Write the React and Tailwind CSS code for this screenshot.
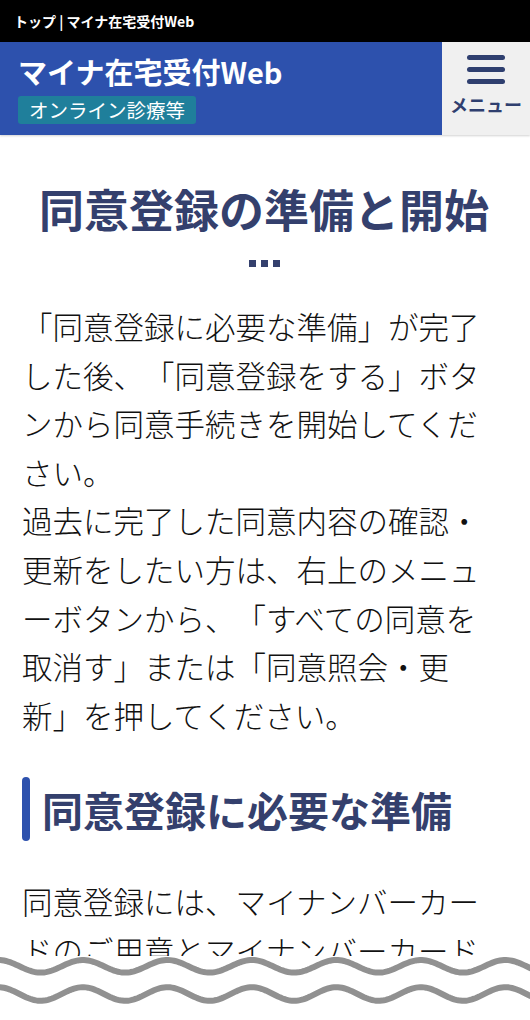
import React from "react";

function wavePath(mid, amp, period, x0, width) {
  const pts = [];
  for (let x = -6; x <= width + 6; x += 2) {
    const y = mid - amp * Math.cos((2 * Math.PI * (x - x0)) / period);
    pts.push(`${x === -6 ? "M" : "L"}${x.toFixed(1)} ${y.toFixed(2)}`);
  }
  return pts.join(" ");
}

function WaveCut() {
  const w = 530;
  return (
    <div className="absolute left-0 right-0 top-[956px] h-[64px] bg-white">
      <svg width={w} height="64" viewBox={`0 0 ${w} 64`} className="block">
        <path d={wavePath(10.3, 6.3, 84.5, -1.6, w)} fill="none" stroke="#919191" strokeWidth="6" />
        <path d={wavePath(38, 6.8, 84.5, -1.6, w)} fill="none" stroke="#919191" strokeWidth="6" />
      </svg>
    </div>
  );
}

export default function App() {
  return (
    <div className="relative h-[1020px] w-full overflow-hidden bg-white font-['Noto_Sans_CJK_JP','Noto_Sans',sans-serif] [text-spacing-trim:space-all]">
      <div className="flex h-[42px] items-center bg-black pl-[14px] text-[14px] font-bold text-white">
        トップ | マイナ在宅受付Web
      </div>
      <header className="flex h-[93px] shadow-[0_1px_2px_rgba(0,0,0,0.18)]">
        <div className="flex flex-1 flex-col items-start bg-[#2d51ad] pl-[18px] pt-[12px]">
          <h1 className="text-[29px] font-bold leading-[34px] text-white">マイナ在宅受付Web</h1>
          <span className="mt-[8px] rounded-[3px] bg-[#1f7f9b] px-[11px] text-[19.5px] leading-[28px] text-white">
            オンライン診療等
          </span>
        </div>
        <button className="flex w-[88px] flex-col items-center bg-[#f0f0f0] pt-[13px]">
          <span className="flex flex-col gap-[7px]">
            <span className="block h-[5px] w-[38px] rounded-full bg-[#2f3f6f]" />
            <span className="block h-[5px] w-[38px] rounded-full bg-[#2f3f6f]" />
            <span className="block h-[5px] w-[38px] rounded-full bg-[#2f3f6f]" />
          </span>
          <span className="mt-[8px] text-[18px] font-bold leading-[24px] text-[#2f3f6f]">メニュー</span>
        </button>
      </header>
      <main className="pl-[22px] pr-[24px] pt-[47px]">
        <h2 className="text-center text-[45px] font-bold leading-[54px] text-[#34406d]">
          同意登録の準備と開始
          <span className="flex h-[54px] items-center justify-center gap-[5px]" aria-label="…">
            <span className="block h-[7px] w-[7px] bg-[#34406d]" />
            <span className="block h-[7px] w-[7px] bg-[#34406d]" />
            <span className="block h-[7px] w-[7px] bg-[#34406d]" />
          </span>
        </h2>
        <p className="mt-[12px] text-[30.5px] font-light leading-[48.6px] text-[#111]">
          「同意登録に必要な準備」が完了した後、「同意登録をする」ボタンから同意手続きを開始してください。
          <br />
          過去に完了した同意内容の確認・更新をしたい方は、右上のメニューボタンから、「すべての同意を取消す」または「同意照会・更新」を押してください。
        </p>
        <div className="mt-[38px] flex items-stretch gap-[12px]">
          <span className="block w-[8px] shrink-0 rounded-[4px] bg-[#2d51ad]" />
          <h3 className="text-[41px] font-bold leading-[64px] text-[#34406d]">同意登録に必要な準備</h3>
        </div>
        <p className="mt-[36px] text-[30.5px] font-light leading-[48.6px] text-[#111]">
          同意登録には、マイナンバーカードのご用意とマイナンバーカードの読み取りに対応したスマートフォンが必要です。
        </p>
      </main>
      <WaveCut />
    </div>
  );
}
